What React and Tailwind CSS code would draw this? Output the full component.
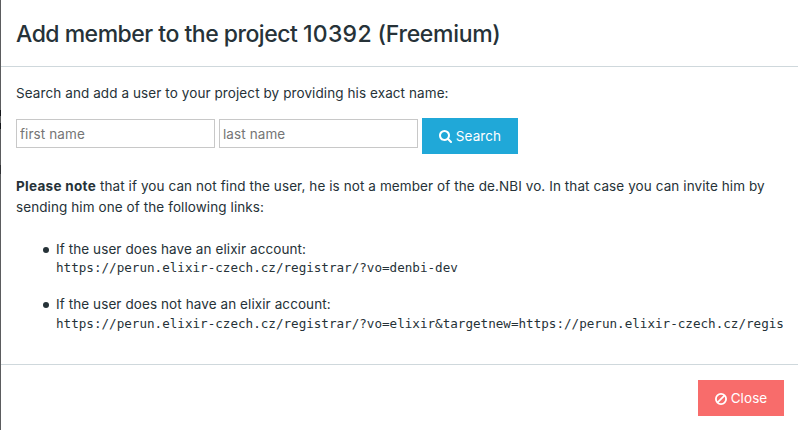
function SearchIcon() {
  return (
    <svg className="h-[13px] w-[13px] shrink-0" viewBox="0 0 1664 1664" fill="currentColor" aria-hidden="true">
      <path d="M1152 704q0-185-131.5-316.500t-316.500-131.500-316.500 131.500-131.500 316.500 131.500 316.500 316.500 131.500 316.500-131.500 131.500-316.500zm512 832q0 52-38 90t-90 38q-54 0-90-38l-343-342q-179 124-399 124-143 0-273.500-55.500t-225-150-150-225-55.500-273.500 55.500-273.500 150-225 225-150 273.500-55.500 273.500 55.500 225 150 150 225 55.500 273.500q0 220-124 399l343 343q37 37 37 90z" />
    </svg>
  );
}

function BanIcon() {
  return (
    <svg className="h-3 w-3 shrink-0" viewBox="0 0 12 12" fill="none" stroke="currentColor" strokeWidth="1.8" aria-hidden="true">
      <circle cx="6" cy="6" r="5.1" />
      <path d="M2.4 9.6 9.6 2.4" />
    </svg>
  );
}

const inputClass =
  "mt-px h-[29px] w-[199px] border border-[#c8c8c8] bg-white px-[3px] text-[13.5px] tracking-[0.09px] text-[#23282c] placeholder:text-[#757575] outline-none";

function LinkItem({ title, url, className }) {
  return (
    <li className={className}>
      <div className="flex h-[21px] items-center">
        <span className="mr-[7px] h-[6px] w-[6px] shrink-0 rounded-full bg-[#263238]" />
        <span>{title}</span>
      </div>
      <pre className="ml-[13px] overflow-hidden font-['DejaVu_Sans_Mono',monospace] text-[12.6px] leading-[18px] tracking-normal">{url}</pre>
    </li>
  );
}

export default function App() {
  return (
    <div className="flex h-[430px] w-full overflow-hidden bg-white font-[Inter,sans-serif] text-[13.5px] leading-[21px] tracking-[0.09px] text-[#263238]">
      <div className="flex w-px shrink-0 flex-col bg-[#5b5c5e]">
        <div className="mt-[110px] h-[6px] bg-[#15171a]" />
        <div className="mt-[7px] h-[6px] bg-[#15171a]" />
        <div className="mt-[36px] h-[9px] bg-[#303235]" />
      </div>
      <div className="flex min-w-0 flex-1 flex-col">
        <header className="h-[67px] shrink-0 border-b border-[#cfd8dc] pt-[17px] pl-[15px]">
          <h4 className="text-[23px] leading-[34px] font-medium tracking-[-0.5px] whitespace-nowrap">
            Add member to the project <span className="tracking-[0.3px]">10392</span>{" "}
            <span className="tracking-[-0.3px]">(Freemium)</span>
          </h4>
        </header>
        <main className="h-[297px] shrink-0 px-[15px] pt-4">
          <p className="whitespace-nowrap">Search and add a user to your project by providing his exact name:</p>
          <div className="mt-[14px] flex h-9 items-start gap-1">
            <input className={inputClass} placeholder="first name" />
            <input className={inputClass} placeholder="last name" />
            <button className="flex h-9 w-24 items-center justify-center gap-1 bg-[#20a8d8] text-white">
              <SearchIcon />
              <span>Search</span>
            </button>
          </div>
          <p className="mt-[22px] whitespace-nowrap">
            <strong className="font-bold tracking-[0.3px]">Please note</strong> that if you can not find the user, he is not a member of the de.NBI vo. In that case you can invite him by
            <br />
            sending him one of the following links:
          </p>
          <ul className="mt-[21px] pl-[27px] [&_pre]:-mt-px">
            <LinkItem title="If the user does have an elixir account:" url="https://perun.elixir-czech.cz/registrar/?vo=denbi-dev" />
            <LinkItem
              className="mt-[17px] [&_pre]:mt-0"
              title="If the user does not have an elixir account:"
              url="https://perun.elixir-czech.cz/registrar/?vo=elixir&targetnew=https://perun.elixir-czech.cz/regis"
            />
          </ul>
        </main>
        <footer className="flex flex-1 items-start justify-end border-t border-[#cfd8dc] pt-[15px] pr-[14px]">
          <button className="flex h-9 w-[86px] items-center justify-center gap-1 bg-[#f86c6b] pt-px text-white">
            <BanIcon />
            <span>Close</span>
          </button>
        </footer>
      </div>
    </div>
  );
}
